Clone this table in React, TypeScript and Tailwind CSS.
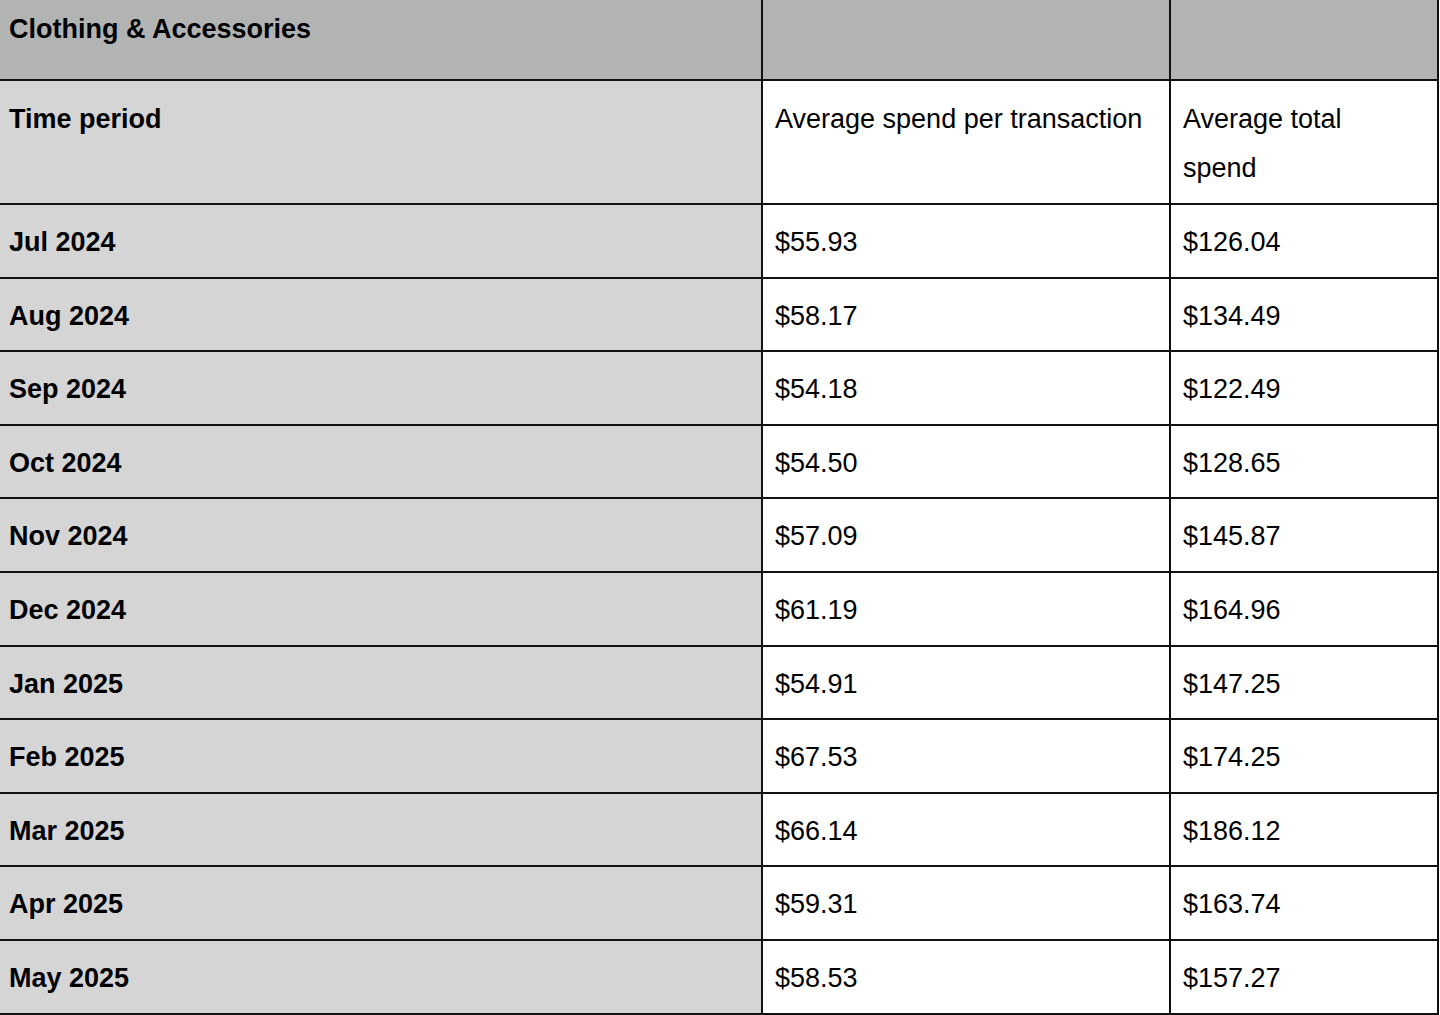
const rows = [
  ["Jul 2024", "$55.93", "$126.04"],
  ["Aug 2024", "$58.17", "$134.49"],
  ["Sep 2024", "$54.18", "$122.49"],
  ["Oct 2024", "$54.50", "$128.65"],
  ["Nov 2024", "$57.09", "$145.87"],
  ["Dec 2024", "$61.19", "$164.96"],
  ["Jan 2025", "$54.91", "$147.25"],
  ["Feb 2025", "$67.53", "$174.25"],
  ["Mar 2025", "$66.14", "$186.12"],
  ["Apr 2025", "$59.31", "$163.74"],
  ["May 2025", "$58.53", "$157.27"],
];

const App = () => {
  return (
    <div className="min-h-screen bg-white font-['Liberation_Sans',Arial,sans-serif] text-[27px] leading-[49px] text-black">
      <div className="grid w-[1439px] grid-cols-[761px_406px_266px] grid-rows-[79px_122px_repeat(11,71.6px)] gap-[2px] bg-[#111] pr-[2px] pb-[2px]">
        <div className="bg-[#b2b4b3] pl-[9px] pt-[5px] font-bold">Clothing &amp; Accessories</div>
        <div className="bg-[#b2b4b3]" />
        <div className="bg-[#b2b4b3]" />

        <div className="bg-[#d5d5d5] pl-[9px] pt-[14px] font-bold">Time period</div>
        <div className="bg-white pl-[12px] pt-[14px]">Average spend per transaction</div>
        <div className="bg-white pl-[12px] pr-[24px] pt-[14px]">Average total spend</div>

        {rows.map(([period, avg, total]) => (
          <div key={period} className="contents">
            <div className="bg-[#d5d5d5] pl-[9px] pt-[13px] font-bold">{period}</div>
            <div className="bg-white pl-[12px] pt-[13px]">{avg}</div>
            <div className="bg-white pl-[12px] pt-[13px]">{total}</div>
          </div>
        ))}
      </div>
    </div>
  );
};

export default App;
